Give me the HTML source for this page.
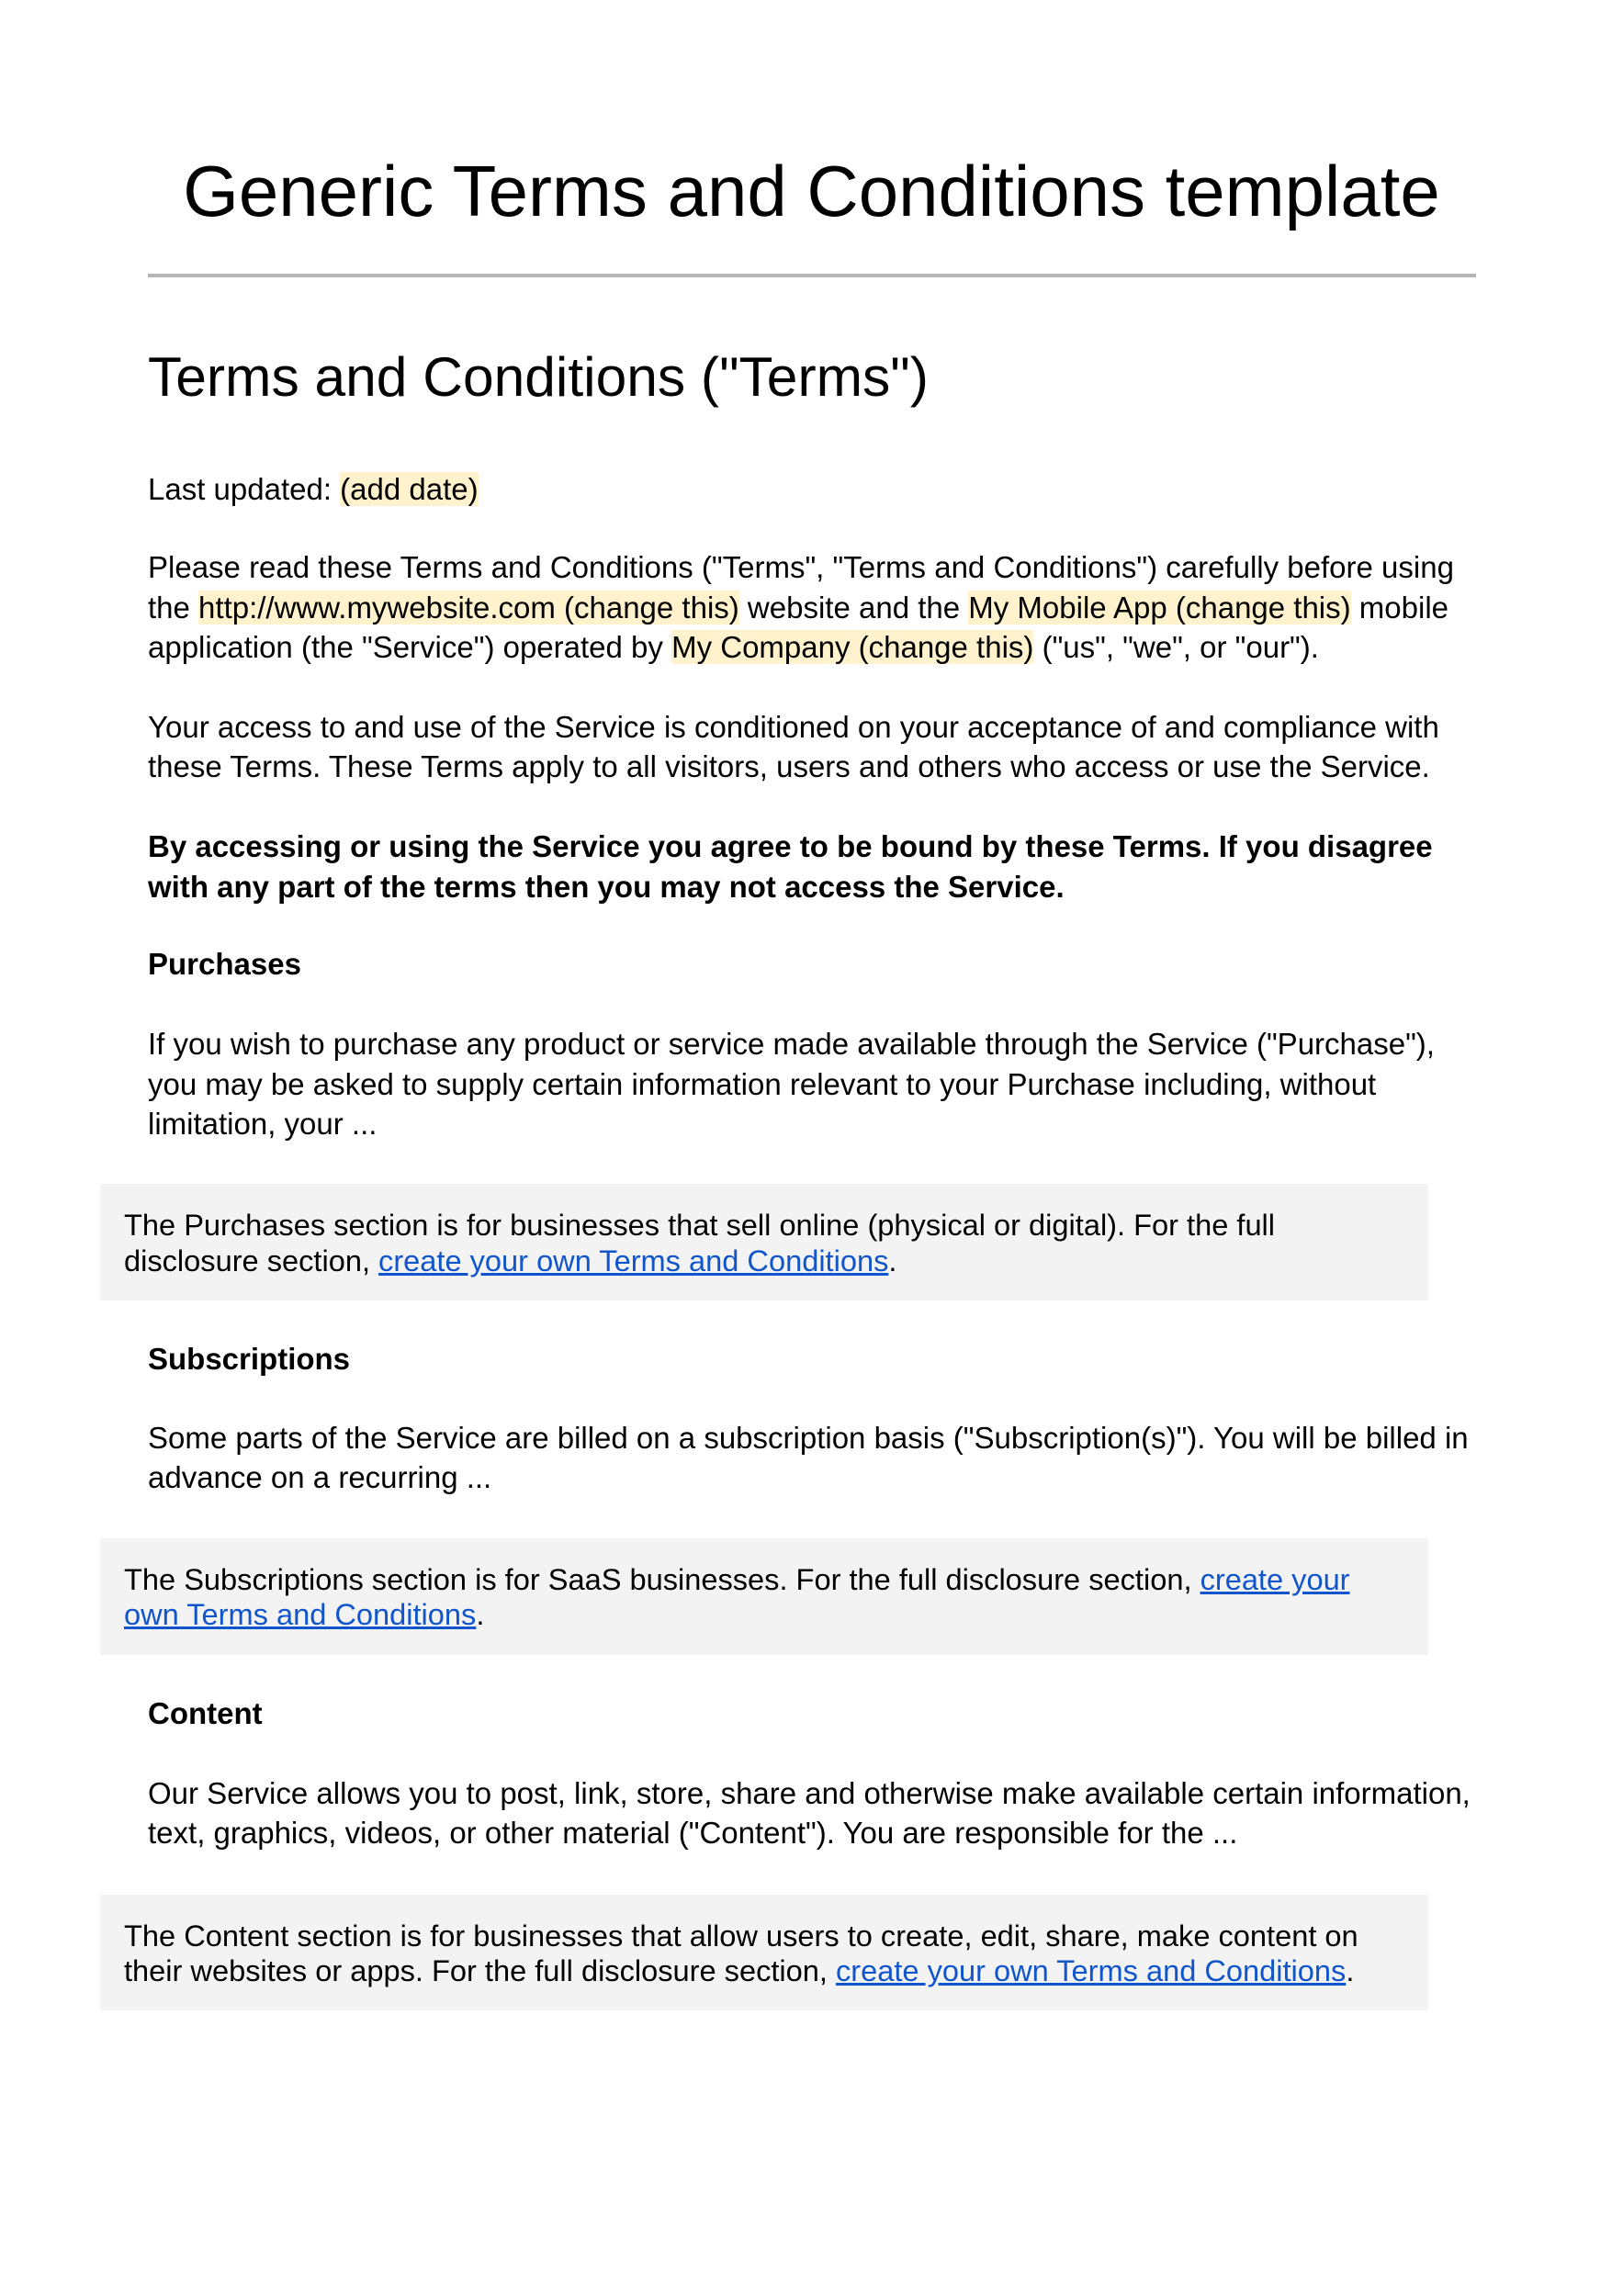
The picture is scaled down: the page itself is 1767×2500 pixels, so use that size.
<!DOCTYPE html>
<html><head><meta charset="utf-8"><style>
html,body{margin:0;padding:0;background:#fff;}
body{width:1767px;height:2500px;position:relative;overflow:hidden;font-family:"Liberation Sans",Arial,sans-serif;color:#000;}
.l{position:absolute;left:161px;white-space:nowrap;font-size:33px;line-height:44px;}
.h{background:#fff2cc;}
.b{font-weight:bold;}
a{color:#1155cc;text-decoration:underline;}
.box{position:absolute;left:109px;width:1446px;background:#f3f3f3;}
.bt{left:135px;font-size:32.6px;}
</style></head><body>
<div style="position:absolute;left:0;width:1767px;top:160px;text-align:center;font-size:78px;line-height:96px;white-space:nowrap">Generic Terms and Conditions template</div>
<div style="position:absolute;left:161px;top:298px;width:1446px;height:4px;background:#b7b7b7"></div>
<div class="l" style="top:375px;font-size:60.5px;line-height:70px">Terms and Conditions ("Terms")</div>

<div class="l" style="top:511px">Last updated: <span class="h">(add date)</span></div>
<div class="l" style="top:596px">Please read these Terms and Conditions ("Terms", "Terms and Conditions") carefully before using</div>
<div class="l" style="top:640px">the <span class="h">http://www.mywebsite.com (change this)</span> website and the <span class="h">My Mobile App (change this)</span> mobile</div>
<div class="l" style="top:683px">application (the "Service") operated by <span class="h">My Company (change this)</span> ("us", "we", or "our").</div>
<div class="l" style="top:770px">Your access to and use of the Service is conditioned on your acceptance of and compliance with</div>
<div class="l" style="top:813px">these Terms. These Terms apply to all visitors, users and others who access or use the Service.</div>
<div class="l b" style="top:900px">By accessing or using the Service you agree to be bound by these Terms. If you disagree</div>
<div class="l b" style="top:944px">with any part of the terms then you may not access the Service.</div>
<div class="l b" style="top:1028px">Purchases</div>
<div class="l" style="top:1115px">If you wish to purchase any product or service made available through the Service ("Purchase"),</div>
<div class="l" style="top:1159px">you may be asked to supply certain information relevant to your Purchase including, without</div>
<div class="l" style="top:1202px">limitation, your ...</div>

<div class="box" style="top:1289px;height:127px"></div>
<div class="l bt" style="top:1312px">The Purchases section is for businesses that sell online (physical or digital). For the full</div>
<div class="l bt" style="top:1351px">disclosure section, <a>create your own Terms and Conditions</a>.</div>

<div class="l b" style="top:1458px">Subscriptions</div>
<div class="l" style="top:1544px">Some parts of the Service are billed on a subscription basis ("Subscription(s)"). You will be billed in</div>
<div class="l" style="top:1587px">advance on a recurring ...</div>

<div class="box" style="top:1675px;height:127px"></div>
<div class="l bt" style="top:1698px">The Subscriptions section is for SaaS businesses. For the full disclosure section, <a>create your</a></div>
<div class="l bt" style="top:1736px"><a>own Terms and Conditions</a>.</div>

<div class="l b" style="top:1844px">Content</div>
<div class="l" style="top:1931px">Our Service allows you to post, link, store, share and otherwise make available certain information,</div>
<div class="l" style="top:1974px">text, graphics, videos, or other material ("Content"). You are responsible for the ...</div>

<div class="box" style="top:2063px;height:126px"></div>
<div class="l bt" style="top:2086px">The Content section is for businesses that allow users to create, edit, share, make content on</div>
<div class="l bt" style="top:2124px">their websites or apps. For the full disclosure section, <a>create your own Terms and Conditions</a>.</div>
</body></html>
